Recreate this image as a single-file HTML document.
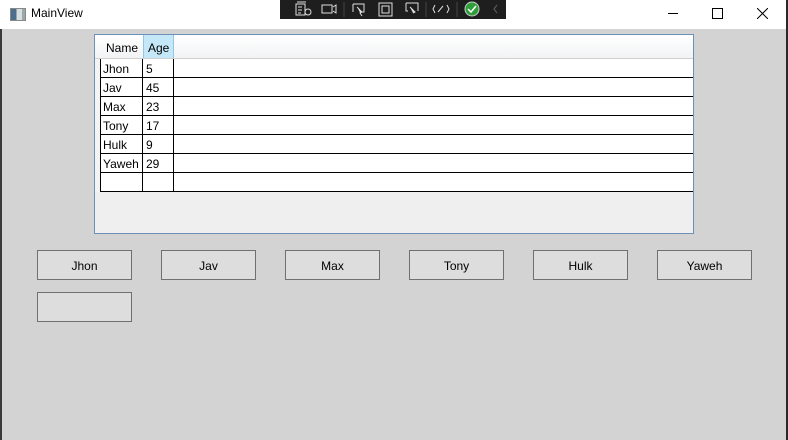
<!DOCTYPE html><html><head><style>
body{margin:0;width:788px;height:440px;overflow:hidden;background:#d3d3d3;font-family:"Segoe UI","Liberation Sans",sans-serif;font-size:12px;position:relative}
.a{position:absolute}
.btn{position:absolute;width:93px;height:28px;border:1px solid #707070;background:#dddddd;text-align:center;line-height:31px;font-size:12px;color:#000}
.cell{position:absolute;font-size:12px;line-height:18px;color:#000}
</style></head><body>
<div class="a" style="left:0;top:0;width:788px;height:29px;background:#fff"></div>
<div class="a" style="left:0;top:29px;width:2px;height:411px;background:#3a3a3a"></div>
<div class="a" style="left:786px;top:0;width:2px;height:440px;background:#2a2a2a"></div>
<div class="a" style="left:10px;top:8px;width:14px;height:11px;border:1px solid #888;background:linear-gradient(90deg,#4a6e8c 0 40%,#d8dde2 40% 80%,#9aa 80%)"></div>
<div class="a" style="left:31px;top:6px;font-size:12px">MainView</div>
<div class="a" style="left:280px;top:0;width:226px;height:19px;background:#1e1e1e"></div>
<svg class="a" style="left:280px;top:0" width="226" height="19" stroke="#ddd" fill="none" stroke-width="1">
<path d="M17 2h9M16 4h9v11h-9z M18 7h4M18 10h4M18 13h3"/><circle cx="28" cy="12" r="3"/>
<rect x="42" y="5" width="10" height="8"/><path d="M53 7l3-2v8l-3-2"/>
<path d="M64 2v15" stroke="#444"/><path d="M73 4h11v8h-3M73 4v8" /><path d="M77 7l5 5-2 1 2 3" fill="#ddd"/>
<rect x="99" y="3" width="13" height="13"/><rect x="102" y="6" width="7" height="7"/>
<path d="M126 3h12v8M126 3v8h2"/><path d="M130 7l5 5-2 1" fill="#ddd"/>
<path d="M146 2v15" stroke="#444"/><path d="M155 5l-2 4 2 4M167 5l2 4-2 4M158 12l5-6"/>
<path d="M177 2v15" stroke="#444"/><circle cx="192" cy="9" r="7" fill="#2e9e3a" stroke="#ccc"/><path d="M188 9l3 3 5-6" stroke="#fff" stroke-width="1.5"/>
<path d="M217 5l-3 4 3 4" stroke="#666"/></svg>
<div class="a" style="left:668px;top:13px;width:10px;height:1px;background:#000"></div>
<div class="a" style="left:712px;top:8px;width:9px;height:9px;border:1px solid #000"></div>
<svg class="a" style="left:757px;top:8px" width="11" height="11" stroke="#000"><path d="M0 0L11 11M11 0L0 11"/></svg>
<div class="a" style="left:94px;top:34px;width:598px;height:198px;border:1px solid #6d8fb8;background:#efefef"></div>
<div class="a" style="left:95px;top:35px;width:598px;height:23px;background:linear-gradient(#fff,#f2f3f5);border-bottom:1px solid #d0d0d0"></div>
<div class="a" style="left:143px;top:35px;width:29px;height:23px;background:#c5e8f8;border-left:1px solid #90c8e8;border-right:1px solid #90c8e8"></div>
<div class="cell" style="left:106px;top:39px">Name</div>
<div class="cell" style="left:148px;top:39px">Age</div>
<div class="a" style="left:100px;top:59px;width:593px;height:133px;background:#fff"></div>
<div class="a" style="left:95px;top:59px;width:5px;height:133px;background:#f4f4f4"></div>
<div class="a" style="left:100px;top:59px;width:1px;height:133px;background:#000"></div>
<div class="a" style="left:142px;top:59px;width:1px;height:133px;background:#000"></div>
<div class="a" style="left:173px;top:59px;width:1px;height:133px;background:#000"></div>
<div class="a" style="left:100px;top:77px;width:593px;height:1px;background:#000"></div>
<div class="a" style="left:100px;top:96px;width:593px;height:1px;background:#000"></div>
<div class="a" style="left:100px;top:115px;width:593px;height:1px;background:#000"></div>
<div class="a" style="left:100px;top:134px;width:593px;height:1px;background:#000"></div>
<div class="a" style="left:100px;top:153px;width:593px;height:1px;background:#000"></div>
<div class="a" style="left:100px;top:172px;width:593px;height:1px;background:#000"></div>
<div class="a" style="left:100px;top:191px;width:593px;height:1px;background:#000"></div>
<div class="cell" style="left:103px;top:60px">Jhon</div><div class="cell" style="left:146px;top:60px">5</div>
<div class="cell" style="left:103px;top:79px">Jav</div><div class="cell" style="left:146px;top:79px">45</div>
<div class="cell" style="left:103px;top:98px">Max</div><div class="cell" style="left:146px;top:98px">23</div>
<div class="cell" style="left:103px;top:117px">Tony</div><div class="cell" style="left:146px;top:117px">17</div>
<div class="cell" style="left:103px;top:136px">Hulk</div><div class="cell" style="left:146px;top:136px">9</div>
<div class="cell" style="left:103px;top:155px">Yaweh</div><div class="cell" style="left:146px;top:155px">29</div>
<div class="btn" style="left:37px;top:250px">Jhon</div>
<div class="btn" style="left:161px;top:250px">Jav</div>
<div class="btn" style="left:285px;top:250px">Max</div>
<div class="btn" style="left:409px;top:250px">Tony</div>
<div class="btn" style="left:533px;top:250px">Hulk</div>
<div class="btn" style="left:657px;top:250px">Yaweh</div>
<div class="btn" style="left:37px;top:292px"></div>
</body></html>
